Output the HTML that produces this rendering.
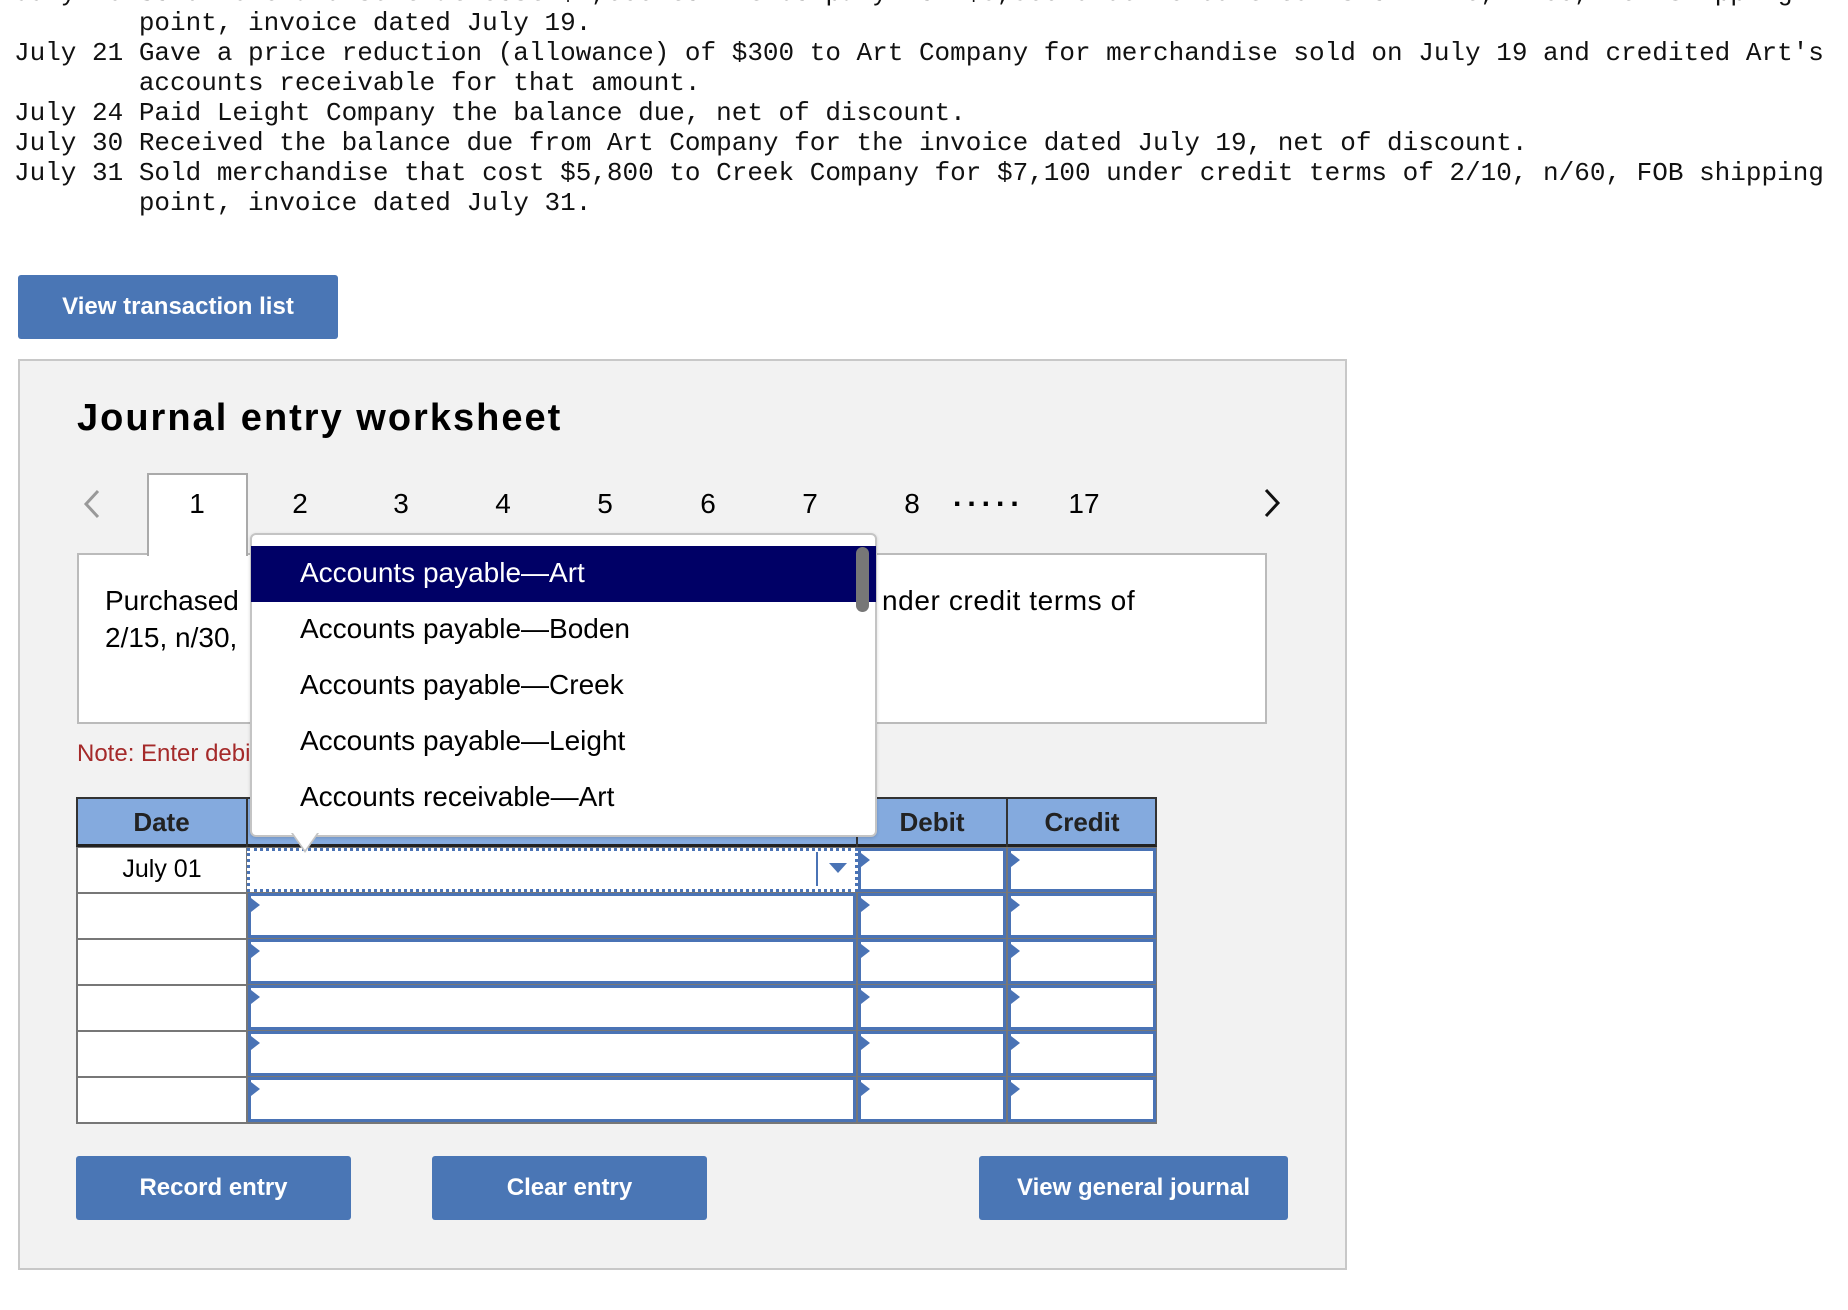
<!DOCTYPE html>
<html><head><meta charset="utf-8"><style>
*{margin:0;padding:0;box-sizing:border-box}
body{width:1848px;height:1310px;background:#fff;position:relative;overflow:hidden;font-family:"Liberation Sans",sans-serif;color:#000}
.a{position:absolute}
.mono{font-family:"Liberation Mono",monospace;font-size:26px;line-height:30px;white-space:pre;color:#111}
.btn{position:absolute;background:#4a76b5;color:#fff;font-weight:bold;font-size:24px;display:flex;align-items:center;justify-content:center;border-radius:3px}
.tab{position:absolute;top:488px;font-size:28px;transform:translateX(-50%)}
.item{position:absolute;left:300px;font-size:28px;line-height:30px}
.cell{position:absolute;border:3px solid #4a73b5;background:#fff}
.cell::before{content:"";position:absolute;left:0;top:2px;border-left:9px solid #4a73b5;border-top:7px solid transparent;border-bottom:7px solid transparent}
</style></head><body>
<div class="a mono" style="left:14px;top:-22px">July 19 Sold merchandise that cost $4,000 to Art Company for $5,500 under credit terms of 2/10, n/60, FOB shipping
        point, invoice dated July 19.
July 21 Gave a price reduction (allowance) of $300 to Art Company for merchandise sold on July 19 and credited Art's
        accounts receivable for that amount.
July 24 Paid Leight Company the balance due, net of discount.
July 30 Received the balance due from Art Company for the invoice dated July 19, net of discount.
July 31 Sold merchandise that cost $5,800 to Creek Company for $7,100 under credit terms of 2/10, n/60, FOB shipping
        point, invoice dated July 31.</div>
<div class="btn" style="left:18px;top:275px;width:320px;height:64px">View transaction list</div>

<div class="a" style="left:18px;top:359px;width:1329px;height:911px;background:#f2f2f2;border:2px solid #c8c8c8"></div>
<div class="a" style="left:77px;top:397px;font-size:38px;font-weight:bold;letter-spacing:2px">Journal entry worksheet</div>

<svg class="a" style="left:80px;top:488px" width="24" height="32"><path d="M18 3 L6 16 L18 29" fill="none" stroke="#999" stroke-width="3"/></svg>
<svg class="a" style="left:1260px;top:487px" width="24" height="32"><path d="M6 3 L18 16 L6 29" fill="none" stroke="#111" stroke-width="3"/></svg>

<div class="a" style="left:77px;top:553px;width:1190px;height:171px;background:#fff;border:2px solid #bbb"></div>
<div class="a" style="left:147px;top:473px;width:101px;height:83px;background:#fff;border:2px solid #aaa;border-bottom:none"></div>
<div class="tab" style="left:197px">1</div>
<div class="tab" style="left:300px">2</div>
<div class="tab" style="left:401px">3</div>
<div class="tab" style="left:503px">4</div>
<div class="tab" style="left:605px">5</div>
<div class="tab" style="left:708px">6</div>
<div class="tab" style="left:810px">7</div>
<div class="tab" style="left:912px">8</div>
<div class="a" style="left:953px;top:480px;font-size:30px;font-weight:bold;letter-spacing:6px">.....</div>
<div class="tab" style="left:1084px">17</div>

<div class="a" style="left:105px;top:582px;font-size:28px;line-height:37px">Purchased<br>2/15, n/30,</div>
<div class="a" style="left:882px;top:582px;font-size:28px;line-height:37px;letter-spacing:0.6px">nder credit terms of</div>
<div class="a" style="left:77px;top:740px;font-size:24px;color:#a52a2a">Note: Enter debits before credits.</div>

<div class="a" style="left:76px;top:797px;width:1081px;height:50px;background:#84aade;border:2px solid #333;border-bottom:3px solid #222"></div>
<div class="a" style="left:246px;top:797px;width:2px;height:50px;background:#333"></div>
<div class="a" style="left:856px;top:797px;width:2px;height:50px;background:#333"></div>
<div class="a" style="left:1006px;top:797px;width:2px;height:50px;background:#333"></div>
<div class="a" style="left:76px;top:807px;width:171px;text-align:center;font-size:26px;font-weight:bold;color:#222">Date</div>
<div class="a" style="left:857px;top:807px;width:150px;text-align:center;font-size:26px;font-weight:bold;color:#222">Debit</div>
<div class="a" style="left:1007px;top:807px;width:150px;text-align:center;font-size:26px;font-weight:bold;color:#222">Credit</div>

<div class="a" style="left:76px;top:847px;width:1081px;height:277px;background:#777"></div>
<div class="a" style="left:78px;top:848px;width:168px;height:44px;background:#fff"></div>
<div class="a" style="left:78px;top:894px;width:168px;height:44px;background:#fff"></div>
<div class="a" style="left:78px;top:940px;width:168px;height:44px;background:#fff"></div>
<div class="a" style="left:78px;top:986px;width:168px;height:44px;background:#fff"></div>
<div class="a" style="left:78px;top:1032px;width:168px;height:44px;background:#fff"></div>
<div class="a" style="left:78px;top:1078px;width:168px;height:44px;background:#fff"></div>
<div class="a" style="left:78px;top:855px;width:168px;text-align:center;font-size:25px">July 01</div>

<div class="a" style="left:247px;top:848px;width:611px;height:44px;background:#fff;border:3px dotted #4a73b5"></div>
<div class="a" style="left:816px;top:852px;width:2px;height:34px;background:#4a73b5"></div>
<div class="a" style="left:829px;top:863px;border-top:10px solid #4a73b5;border-left:9px solid transparent;border-right:9px solid transparent"></div>

<div class="cell" style="left:248px;top:893px;width:608px;height:45px"></div>
<div class="cell" style="left:248px;top:939px;width:608px;height:45px"></div>
<div class="cell" style="left:248px;top:985px;width:608px;height:45px"></div>
<div class="cell" style="left:248px;top:1031px;width:608px;height:45px"></div>
<div class="cell" style="left:248px;top:1077px;width:608px;height:45px"></div>

<div class="cell" style="left:858px;top:848px;width:148px;height:44px"></div>
<div class="cell" style="left:858px;top:893px;width:148px;height:45px"></div>
<div class="cell" style="left:858px;top:939px;width:148px;height:45px"></div>
<div class="cell" style="left:858px;top:985px;width:148px;height:45px"></div>
<div class="cell" style="left:858px;top:1031px;width:148px;height:45px"></div>
<div class="cell" style="left:858px;top:1077px;width:148px;height:45px"></div>
<div class="cell" style="left:1008px;top:848px;width:148px;height:44px"></div>
<div class="cell" style="left:1008px;top:893px;width:148px;height:45px"></div>
<div class="cell" style="left:1008px;top:939px;width:148px;height:45px"></div>
<div class="cell" style="left:1008px;top:985px;width:148px;height:45px"></div>
<div class="cell" style="left:1008px;top:1031px;width:148px;height:45px"></div>
<div class="cell" style="left:1008px;top:1077px;width:148px;height:45px"></div>

<div class="btn" style="left:76px;top:1156px;width:275px;height:64px">Record entry</div>
<div class="btn" style="left:432px;top:1156px;width:275px;height:64px">Clear entry</div>
<div class="btn" style="left:979px;top:1156px;width:309px;height:64px">View general journal</div>

<div class="a" style="left:250px;top:533px;width:627px;height:304px;background:#fff;border:2px solid #c4c4c4;border-radius:6px;box-shadow:0 1px 3px rgba(0,0,0,.15)"></div>
<div class="a" style="left:291px;top:833px;width:0;height:0;border-top:20px solid #c4c4c4;border-left:14px solid transparent;border-right:14px solid transparent"></div>
<div class="a" style="left:293px;top:833px;width:0;height:0;border-top:17px solid #fff;border-left:12px solid transparent;border-right:12px solid transparent"></div>
<div class="a" style="left:251px;top:546px;width:625px;height:56px;background:#000066"></div>
<div class="a" style="left:856px;top:547px;width:13px;height:65px;background:#777;border-radius:7px"></div>
<div class="item" style="left:300px;top:558px;color:#fff">Accounts payable—Art</div>
<div class="item" style="top:614px">Accounts payable—Boden</div>
<div class="item" style="top:670px">Accounts payable—Creek</div>
<div class="item" style="top:726px">Accounts payable—Leight</div>
<div class="item" style="top:782px">Accounts receivable—Art</div>
</body></html>
